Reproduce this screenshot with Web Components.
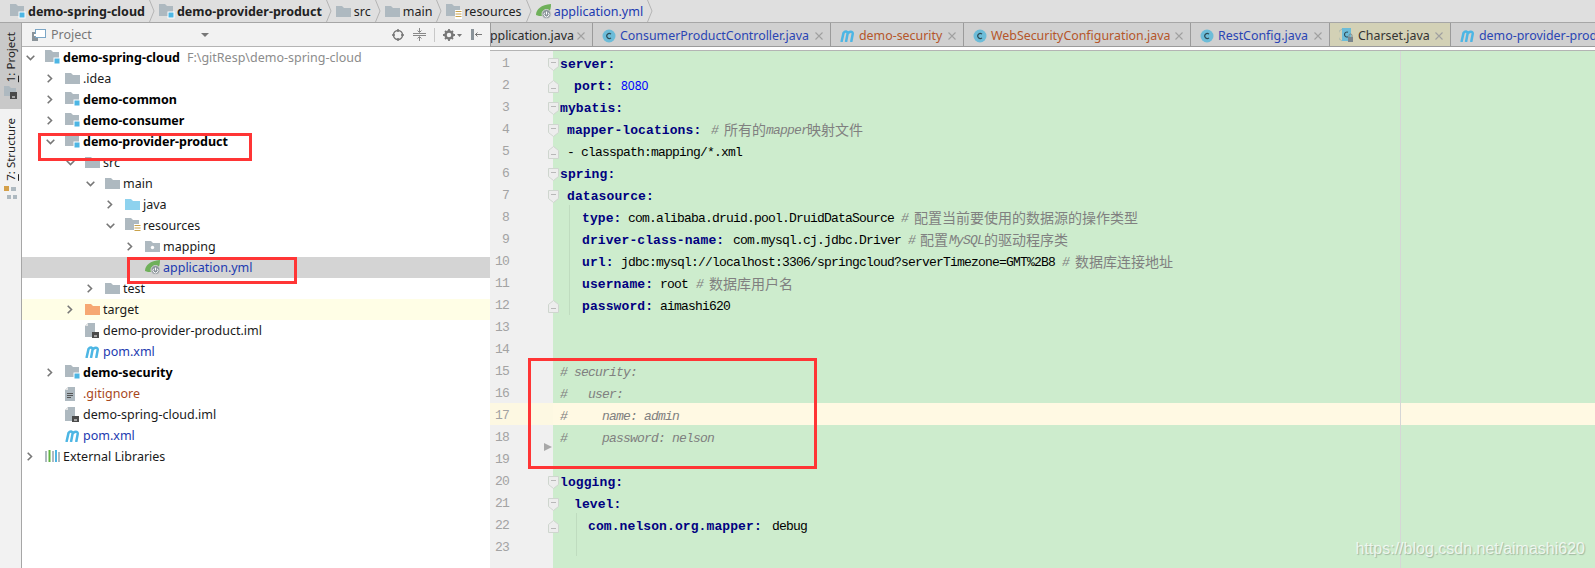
<!DOCTYPE html>
<html>
<head>
<meta charset="utf-8">
<style>
  html, body { margin: 0; padding: 0; height: 100%; overflow: hidden; background: #fff; }
</style>
</head>
<body>
<ide-window></ide-window>
<script>
const ICONS = {
  folder: `<svg width="15" height="13" viewBox="0 0 15 13"><path d="M0 1h6l2 2h7v9H0z" fill="#aeb9c0"/></svg>`,
  module: `<svg width="16" height="15" viewBox="0 0 16 15"><path d="M0 0h6l2 2h6v10H0z" fill="#aeb9c0"/><rect x="9" y="8" width="6" height="6" fill="#4db6e4" stroke="#fff" stroke-width="1"/></svg>`,
  java: `<svg width="15" height="13" viewBox="0 0 15 13"><path d="M0 1h6l2 2h7v9H0z" fill="#8ed2ee"/></svg>`,
  orange: `<svg width="15" height="13" viewBox="0 0 15 13"><path d="M0 1h6l2 2h7v9H0z" fill="#f6a873"/></svg>`,
  res: `<svg width="16" height="15" viewBox="0 0 16 15"><path d="M0 0h6l2 2h6v10H0z" fill="#aeb9c0"/><rect x="9" y="6" width="7" height="9" fill="#fff"/><path d="M9.500 7.500h6M9.500 10h6M9.500 12.500h6" stroke="#c9a24a" stroke-width="1"/></svg>`,
  pkg: `<svg width="15" height="13" viewBox="0 0 15 13"><path d="M0 1h6l2 2h7v9H0z" fill="#aeb9c0"/><circle cx="7.500" cy="7.500" r="1.700" fill="#fff"/></svg>`,
  spring: `<svg width="16" height="15" viewBox="0 0 16 15"><path d="M0 11C0 5 5 1 15 0c0 6-2 10-6 12H3z" fill="#6fb05a"/><circle cx="10.500" cy="10" r="4.500" fill="#8a9399" stroke="#d4d4d4"/><path d="M10.500 7.500v3" stroke="#fff"/><path d="M8.800 8.600a2.500 2.500 0 1 0 3.400 0" fill="none" stroke="#fff"/></svg>`,
  iml: `<svg width="14" height="15" viewBox="0 0 14 15"><path d="M3 0h7v14H0V3z" fill="#aeb9c0"/><path d="M0 3h3V0z" fill="#e4e4e4"/><rect x="7" y="9" width="7" height="6" fill="#4a4a4a"/><path d="M9 13h3" stroke="#fff"/></svg>`,
  text: `<svg width="11" height="14" viewBox="0 0 11 14"><path d="M3 0h7v14H0V3z" fill="#aeb9c0"/><path d="M0 3h3V0z" fill="#e4e4e4"/><path d="M2 6.500h6M2 8.500h6M2 10.500h4" stroke="#555"/></svg>`,
  maven: `<svg width="15" height="12" viewBox="0 0 15 12"><path d="M1.500 12 3.500 3C5 .8 8 1 7.500 4L6 12M7.500 4C9 .8 13.200 1 12.700 4L11.200 12" fill="none" stroke="#4db6e4" stroke-width="2.500"/></svg>`,
  libs: `<svg width="15" height="13" viewBox="0 0 15 13"><path d="M1 1v11" stroke="#aeb9c0" stroke-width="2"/><path d="M4.500 0v12" stroke="#62b543" stroke-width="2"/><path d="M8 1v11" stroke="#aeb9c0" stroke-width="2"/><path d="M11 0v12" stroke="#4db6e4" stroke-width="2"/><path d="M14 2v10" stroke="#aeb9c0" stroke-width="2"/></svg>`,
  cls: `<svg width="14" height="14" viewBox="0 0 14 14"><circle cx="7" cy="7" r="6.500" fill="#6cbcd8"/><path d="M9 5.200A2.500 2.500 0 1 0 9 8.800" fill="none" stroke="#2d4a55" stroke-width="1.100"/></svg>`,
  clsLock: `<svg width="15" height="15" viewBox="0 0 15 15"><path d="M3 1a6.500 6.500 0 0 0 0 12" fill="none" stroke="#a8b8b0"/><rect x="3" y="0" width="9" height="13" fill="#6cbcd8"/><path d="M9 4.200A2.500 2.500 0 1 0 9 8.800" fill="none" stroke="#2d4a55" stroke-width="1.100"/><rect x="9" y="9" width="5" height="5" fill="#7a858c"/><path d="M10 9V7.500a1.500 1.500 0 0 1 3 0V9" fill="none" stroke="#7a858c"/></svg>`
};

class BreadItem extends HTMLElement {
  constructor() {
    super();
    const shadow = this.attachShadow( {mode: 'open'} );
    const icon = ICONS[this.getAttribute( 'icon' )];
    shadow.innerHTML = `
      <style>
        :host { display: flex; align-items: center; height: 22px; flex: none; }
        .icon { display: flex; width: 18px; flex: none; }
        .sep { margin-left: 4px; margin-right: 4px; flex: none; display: flex; }
      </style>
      <span class="icon">${icon}</span>
      <slot></slot>
      <svg class="sep" width="6" height="22" viewBox="0 0 6 22"><path d="M0.500 0 5 11 0.500 22" fill="none" stroke="#b4b4b4"/></svg>
    `;
  }
}

class BreadBar extends HTMLElement {
  constructor() {
    super();
    this.attachShadow( {mode: 'open'} ).innerHTML = `
      <style>
        :host {
          display: flex;
          align-items: center;
          height: 22px;
          padding-left: 10px;
          background: #dfdfdf;
          border-bottom: solid 1px #a6a6a6;
          font: 12.500px "Noto Sans", sans-serif;
          color: #222;
        }
      </style>
      <slot></slot>
    `;
  }
}

class SideStrip extends HTMLElement {
  constructor() {
    super();
    this.attachShadow( {mode: 'open'} ).innerHTML = `
      <style>
        :host {
          display: flex;
          flex-direction: column;
          width: 21px;
          flex: none;
          background: #f2f2f2;
          border-right: solid 1px #a6a6a6;
          font: 11.500px "Noto Sans", sans-serif;
          color: #222;
        }
        .tab { display: flex; flex-direction: column; align-items: center; }
        .on { background: #c9c9c9; height: 86px; padding-top: 9px; box-sizing: border-box; gap: 4px; }
        .off { padding-top: 9px; gap: 5px; }
        .v { writing-mode: vertical-rl; transform: rotate( 180deg ); line-height: 14px; white-space: nowrap; }
        u { text-underline-offset: 1px; }
      </style>
      <div class="tab on">
        <span class="v"><u>1</u>: Project</span>
        <svg width="13" height="13" viewBox="0 0 13 13"><path d="M0 0h5l2 2h5v8H0z" fill="#aeb9c0"/><rect x="6" y="6" width="7" height="7" fill="#4a4a4a"/><path d="M8 11h3" stroke="#fff"/></svg>
      </div>
      <div class="tab off">
        <span class="v"><u>7</u>: Structure</span>
        <svg width="13" height="14" viewBox="0 0 13 14"><rect x="0" y="0" width="5" height="5" fill="#d4a04a"/><path d="M7 1h5v4H7zM3 9h4v4H3zM9 9h4v4H9z" fill="#aeb9c0"/></svg>
      </div>
    `;
  }
}

class ProjectHeader extends HTMLElement {
  constructor() {
    super();
    this.attachShadow( {mode: 'open'} ).innerHTML = `
      <style>
        :host {
          display: flex;
          align-items: center;
          box-sizing: border-box;
          height: 24px;
          flex: none;
          background: #f2f2f2;
          border-bottom: solid 1px #b4b4b4;
          padding-left: 10px;
          font: 12.500px "Noto Sans", sans-serif;
          color: #777;
        }
        .title { margin-left: 5px; width: 150px; }
        .drop { width: 0; height: 0; border: solid 4px transparent; border-top: solid 4px #777; border-bottom: none; margin-right: 183px; }
        svg { flex: none; display: block; }
      </style>
      <svg width="14" height="12" viewBox="0 0 14 12"><rect x="0" y="3" width="6" height="9" fill="#8a9399"/><rect x="3.500" y="0.500" width="10" height="8" fill="#fff" stroke="#7ba6c6"/><rect x="2" y="5" width="2" height="2" fill="#fff"/></svg>
      <span class="title">Project</span>
      <span class="drop"></span>
      <svg width="12" height="12" viewBox="0 0 12 12"><circle cx="6" cy="6" r="4.500" fill="none" stroke="#777" stroke-width="1.500"/><path d="M6 0v3M6 9v3M0 6h3M9 6h3" stroke="#777" stroke-width="1.500"/></svg>
      <svg style="margin-left:9px" width="13" height="13" viewBox="0 0 13 13"><path d="M0 5.500h13M0 7.500h13" stroke="#888"/><path d="M6.500 0v4M4.500 2.500l2 2 2-2M6.500 13V9M4.500 10.500l2-2 2 2" fill="none" stroke="#888"/></svg>
      <span style="width:1px;height:14px;background:#c8c8c8;margin:0 8px"></span>
      <svg width="19" height="12" viewBox="0 0 19 12"><circle cx="6" cy="6" r="3.500" fill="none" stroke="#777" stroke-width="2.500"/><path d="M6 0v2.500M6 9.500V12M0 6h2.500M9.500 6H12M2 2l1.500 1.500M8.500 8.500 10 10M2 10l1.500-1.500M8.500 3.500 10 2" stroke="#777" stroke-width="1.800"/><path d="M14 5h5l-2.500 3z" fill="#777"/></svg>
      <svg style="margin-left:9px" width="11" height="11" viewBox="0 0 11 11"><rect x="0" y="0" width="3" height="11" fill="#8a9399"/><path d="M4 5.500h7M6.500 3.500l-2 2 2 2" fill="none" stroke="#777"/></svg>
    `;
  }
}

class TreeRow extends HTMLElement {
  constructor() {
    super();
    const depth = Number( this.getAttribute( 'depth' ) || 0 );
    const arrow = this.getAttribute( 'arrow' );
    const icon = ICONS[this.getAttribute( 'icon' )];
    let chevron = '';
    if( arrow === 'open' ) {
      chevron = `<svg width="9" height="6" viewBox="0 0 9 6"><path d="M.700.700 4.500 4.500 8.300.700" fill="none" stroke="#777" stroke-width="1.600"/></svg>`;
    }
    if( arrow === 'closed' ) {
      chevron = `<svg width="6" height="9" viewBox="0 0 6 9"><path d="M.700.700 4.500 4.500.700 8.300" fill="none" stroke="#777" stroke-width="1.600"/></svg>`;
    }
    this.attachShadow( {mode: 'open'} ).innerHTML = `
      <style>
        :host {
          display: flex;
          align-items: center;
          height: 21px;
          flex: none;
          padding-left: ${depth * 20}px;
          font: 12.500px/21px "Noto Sans", sans-serif;
          color: #1a1a1a;
          white-space: nowrap;
        }
        :host( [bold] ) { font-weight: 700; color: #000; }
        :host( [hint] ) { background: #fffee6; }
        :host( [selected] ) { background: #d4d4d4; }
        :host( [kind=blue] ) { color: #1c3ab0; }
        :host( [kind=orange] ) { color: #a8481c; }
        .arrow { width: 16px; display: flex; justify-content: center; align-items: center; flex: none; }
        .icon { width: 18px; margin-left: 7px; display: flex; align-items: center; flex: none; }
        .note { color: #8c8c8c; font-weight: 400; margin-left: 7px; }
      </style>
      <span class="arrow">${chevron}</span>
      <span class="icon">${icon}</span>
      <slot></slot>
      <span class="note"><slot name="note"></slot></span>
    `;
  }
}

class ProjectTree extends HTMLElement {
  constructor() {
    super();
    this.attachShadow( {mode: 'open'} ).innerHTML = `
      <style>
        :host { display: flex; flex-direction: column; position: relative; flex: 1; overflow: hidden; background: #fff; }
      </style>
      <slot></slot>
    `;
  }
}

class RedBox extends HTMLElement {
  constructor() {
    super();
    this.attachShadow( {mode: 'open'} ).innerHTML = `
      <style>
        :host { display: block; position: absolute; box-sizing: border-box; border: solid 3px #ff3535; z-index: 5; pointer-events: none; }
      </style>
    `;
  }
}

class EditorTab extends HTMLElement {
  constructor() {
    super();
    const icon = ICONS[this.getAttribute( 'icon' )];
    this.attachShadow( {mode: 'open'} ).innerHTML = `
      <style>
        :host {
          display: flex;
          align-items: center;
          flex: none;
          box-sizing: border-box;
          height: 23px;
          border-right: solid 1px #9b9b9b;
          padding-left: 9px;
          padding-top: 2px;
          font: 12.400px "Noto Sans", sans-serif;
          color: #2a45b4;
          white-space: nowrap;
          overflow: hidden;
        }
        :host( [kind=orange] ) { color: #b5562a; }
        :host( [kind=plain] ) { color: #333; background: #d3d1b6; }
        :host( [kind=clip] ) { color: #2a2a2a; padding-left: 0; }
        .icon { display: flex; margin-right: 4px; flex: none; }
        .x { margin-left: auto; margin-right: 7px; flex: none; display: flex; }
      </style>
      <span class="icon">${icon || ''}</span>
      <slot></slot>
      <svg class="x" width="8" height="8" viewBox="0 0 8 8"><path d="M.500.500l7 7M7.500.500l-7 7" stroke="#a0a0a0" stroke-width="1.100"/></svg>
    `;
  }
}

class TabBar extends HTMLElement {
  constructor() {
    super();
    this.attachShadow( {mode: 'open'} ).innerHTML = `
      <style>
        :host {
          display: flex;
          box-sizing: border-box;
          height: 24px;
          flex: none;
          background: #d0d0d0;
          border-left: solid 1px #9b9b9b;
          border-bottom: solid 1px #9b9b9b;
          overflow: hidden;
        }
      </style>
      <slot></slot>
    `;
  }
}

// fold: d = opens downward, u = closes upward
class CodeLine extends HTMLElement {
  constructor() {
    super();
    const fold = this.getAttribute( 'fold' );
    let marker = '';
    if( fold === 'd' ) {
      marker = `<svg class="fold" width="11" height="13" viewBox="0 0 11 13"><path d="M.500.500h10v8l-5 4-5-4z" fill="#ededed" stroke="#cfd6cf"/><path d="M3 4.500h5" stroke="#b8b8b8"/></svg>`;
    }
    if( fold === 'u' ) {
      marker = `<svg class="fold" width="11" height="13" viewBox="0 0 11 13"><path d="M.500 12.500h10v-8l-5-4-5 4z" fill="#ededed" stroke="#cfd6cf"/><path d="M3 8.500h5" stroke="#b8b8b8"/></svg>`;
    }
    this.attachShadow( {mode: 'open'} ).innerHTML = `
      <style>
        :host { display: flex; height: 22px; flex: none; position: relative; }
        .num {
          box-sizing: border-box;
          width: 63px;
          flex: none;
          background: #f0f0f0;
          text-align: right;
          padding-right: 44px;
          font: 13px/26px "Liberation Mono", monospace;
          letter-spacing: -.8px;
          color: #a3a3a3;
          overflow: hidden;
        }
        :host( [current] ) .num { background: #fdf8e2; }
        .code {
          flex: 1;
          display: flex;
          align-items: flex-start;
          font: 13px/27px "Liberation Mono", "Noto Sans CJK SC", monospace;
          letter-spacing: -.8px;
          color: #000;
        }
        :host( [current] ) .code { background: #fff9e3; }
        .fold { position: absolute; left: 58px; top: 7px; }
      </style>
      <div class="num">${this.getAttribute( 'n' )}</div>
      <div class="code"><slot></slot></div>
      ${marker}
    `;
  }
}

// a run of code that takes a fixed width of the line, so the next run starts at its column
class CodeRun extends HTMLElement {
  constructor() {
    super();
    const at = this.getAttribute( 'at' );
    this.attachShadow( {mode: 'open'} ).innerHTML = `<style>
        :host { display: block; flex: none; white-space: pre; height: 22px; ${at !== null ? 'width: ' + at + 'px;' : ''} }
        :host( [t=key] ) { font-weight: 700; color: #000080; letter-spacing: .1px; }
        :host( [t=num] ) { color: #0000ff; font-family: "Noto Sans", sans-serif; font-size: 12px; line-height: 26px; letter-spacing: 0; }
        :host( [t=com] ) { color: #808080; font-style: italic; }
        :host( [t=sharp] ) { color: #808080; font-style: italic; }
        :host( [t=cjk] ) { color: #808080; font-family: "Noto Sans CJK SC", sans-serif; font-size: 14px; line-height: 24px; letter-spacing: 0; }
      </style><slot></slot>`;
  }
}

class CodeEditor extends HTMLElement {
  constructor() {
    super();
    this.attachShadow( {mode: 'open'} ).innerHTML = `
      <style>
        :host {
          display: flex;
          flex-direction: column;
          position: relative;
          flex: 1;
          overflow: hidden;
          background: linear-gradient( to right, #f0f0f0 63px, #cdeccd 63px );
        }
        .margin { position: absolute; left: 910px; top: 0; bottom: 0; width: 1px; background: #d6d6d6; z-index: 2; }
        .guide { position: absolute; width: 1px; background: #bfdcbf; z-index: 2; }
        .tri { position: absolute; left: 54px; top: 392px; width: 0; height: 0; border-left: solid 8px #a8a8a8; border-top: solid 4px transparent; border-bottom: solid 4px transparent; z-index: 2; }
        .mark {
          position: absolute;
          right: 10px;
          bottom: 10px;
          font: 16px "Liberation Sans", sans-serif;
          color: rgba( 255, 255, 255, .75 );
          text-shadow: 1px 1px 1px rgba( 0, 0, 0, .22 );
          z-index: 3;
        }
      </style>
      <slot></slot>
      <div class="margin"></div>
      <div class="guide" style="left:79px;top:154px;height:110px"></div>
      <div class="guide" style="left:86px;top:462px;height:43px"></div>
      <div class="tri"></div>
      <div class="mark">https://blog.csdn.net/aimashi620</div>
    `;
  }
}

class IdeWindow extends HTMLElement {
  constructor() {
    super();
    const tree = [
      [0, 'open', 'module', 'demo-spring-cloud', 'bold', '', 'F:\\gitResp\\demo-spring-cloud'],
      [1, 'closed', 'folder', '.idea'],
      [1, 'closed', 'module', 'demo-common', 'bold'],
      [1, 'closed', 'module', 'demo-consumer', 'bold'],
      [1, 'open', 'module', 'demo-provider-product', 'bold'],
      [2, 'open', 'folder', 'src'],
      [3, 'open', 'folder', 'main'],
      [4, 'closed', 'java', 'java'],
      [4, 'open', 'res', 'resources'],
      [5, 'closed', 'pkg', 'mapping'],
      [5, '', 'spring', 'application.yml', 'selected', 'blue'],
      [3, 'closed', 'folder', 'test'],
      [2, 'closed', 'orange', 'target', 'hint'],
      [2, '', 'iml', 'demo-provider-product.iml'],
      [2, '', 'maven', 'pom.xml', '', 'blue'],
      [1, 'closed', 'module', 'demo-security', 'bold'],
      [1, '', 'text', '.gitignore', '', 'orange'],
      [1, '', 'iml', 'demo-spring-cloud.iml'],
      [1, '', 'maven', 'pom.xml', '', 'blue'],
      [0, 'closed', 'libs', 'External Libraries']
    ].map( ( [depth, arrow, icon, label, flag, kind, note] ) => `
      <tree-row depth="${depth}" arrow="${arrow}" icon="${icon}" ${flag || ''} kind="${kind || ''}">${label}${note ? `<span slot="note">${note}</span>` : ''}</tree-row>
    ` ).join( '' );

    const k = ( at, s ) => `<code-run t="key" ${at === null ? '' : `at="${at}"`}>${s}</code-run>`;
    const p = ( at, s ) => `<code-run ${at === null ? '' : `at="${at}"`}>${s}</code-run>`;
    const c = ( at, s ) => `<code-run t="com" ${at === null ? '' : `at="${at}"`}>${s}</code-run>`;
    const h = ( at ) => `<code-run t="sharp" at="${at}">#</code-run>`;
    const z = ( at, s ) => `<code-run t="cjk" ${at === null ? '' : `at="${at}"`}>${s}</code-run>`;
    const i = ( w ) => `<code-run at="${w}"></code-run>`;

    const lines = [
      ['d', i( 7 ) + k( null, 'server:' )],
      ['u', i( 21 ) + k( 47, 'port:' ) + `<code-run t="num">8080</code-run>`],
      ['d', i( 7 ) + k( null, 'mybatis:' )],
      ['d', i( 14 ) + k( 144, 'mapper-locations:' ) + h( 13 ) + z( 42, '所有的' ) + c( 41, 'mapper' ) + z( null, '映射文件' )],
      ['u', i( 14 ) + p( 14, '-' ) + p( null, 'classpath:mapping/*.xml' )],
      ['d', i( 7 ) + k( null, 'spring:' )],
      ['d', i( 14 ) + k( null, 'datasource:' )],
      ['', i( 29 ) + k( 46, 'type:' ) + p( 273, 'com.alibaba.druid.pool.DruidDataSource' ) + h( 13 ) + z( null, '配置当前要使用的数据源的操作类型' )],
      ['', i( 29 ) + k( 151, 'driver-class-name:' ) + p( 175, 'com.mysql.cj.jdbc.Driver' ) + h( 12 ) + z( 29, '配置' ) + c( 35, 'MySQL' ) + z( null, '的驱动程序类' )],
      ['', i( 29 ) + k( 39, 'url:' ) + p( 441, 'jdbc:mysql://localhost:3306/springcloud?serverTimezone=GMT%2B8' ) + h( 13 ) + z( null, '数据库连接地址' )],
      ['', i( 29 ) + k( 78, 'username:' ) + p( 36, 'root' ) + h( 13 ) + z( null, '数据库用户名' )],
      ['u', i( 29 ) + k( 78, 'password:' ) + p( null, 'aimashi620' )],
      ['', ''],
      ['', ''],
      ['', i( 7 ) + h( 14 ) + c( null, 'security:' )],
      ['', i( 7 ) + h( 28 ) + c( null, 'user:' )],
      ['', i( 7 ) + h( 42 ) + c( null, 'name: admin' )],
      ['', i( 7 ) + h( 42 ) + c( null, 'password: nelson' )],
      ['', ''],
      ['d', i( 7 ) + k( null, 'logging:' )],
      ['d', i( 21 ) + k( null, 'level:' )],
      ['u', i( 35 ) + k( 184, 'com.nelson.org.mapper:' ) + p( null, 'debug' )],
      ['', ''],
      ['', ''],
      ['', '']
    ].map( ( [fold, html], index ) => {
      const n = index + 1;
      return `<code-line n="${n < 24 ? n : ''}" fold="${fold}" ${n === 17 ? 'current' : ''}>${html}</code-line>`;
    } ).join( '' );

    this.attachShadow( {mode: 'open'} ).innerHTML = `
      <style>
        :host { display: flex; flex-direction: column; position: relative; width: 1595px; height: 568px; overflow: hidden; }
        .body { display: flex; flex: 1; min-height: 0; }
        .left { display: flex; flex-direction: column; width: 468px; flex: none; }
        .right { display: flex; flex-direction: column; flex: 1; min-width: 0; }
        .gap { height: 4px; flex: none; background: #fff; border-bottom: solid 1px #b4b4b4; box-sizing: border-box; }
        b { font-weight: 700; }
        red-box:nth-of-type( 1 ) { left: 38px; top: 133px; width: 214px; height: 28px; }
        red-box:nth-of-type( 2 ) { left: 127px; top: 257px; width: 170px; height: 27px; }
        red-box:nth-of-type( 3 ) { left: 528px; top: 358px; width: 289px; height: 111px; }
      </style>
      <bread-bar>
        <bread-item icon="module"><b>demo-spring-cloud</b></bread-item>
        <bread-item icon="module"><b>demo-provider-product</b></bread-item>
        <bread-item icon="folder">src</bread-item>
        <bread-item icon="folder">main</bread-item>
        <bread-item icon="res">resources</bread-item>
        <bread-item icon="spring"><span style="color:#1c3ab0">application.yml</span></bread-item>
      </bread-bar>
      <div class="body">
        <side-strip></side-strip>
        <div class="left">
          <project-header></project-header>
          <project-tree>${tree}</project-tree>
        </div>
        <div class="right">
          <tab-bar>
            <editor-tab kind="clip" style="width:102px"><span style="margin-left:-13px">Application.java</span></editor-tab>
            <editor-tab icon="cls" style="width:238px">ConsumerProductController.java</editor-tab>
            <editor-tab icon="maven" kind="orange" style="width:133px">demo-security</editor-tab>
            <editor-tab icon="cls" kind="orange" style="width:227px">WebSecurityConfiguration.java</editor-tab>
            <editor-tab icon="cls" style="width:139px">RestConfig.java</editor-tab>
            <editor-tab icon="clsLock" kind="plain" style="width:121px">Charset.java</editor-tab>
            <editor-tab icon="maven" style="width:200px">demo-provider-product.iml</editor-tab>
          </tab-bar>
          <div class="gap"></div>
          <code-editor>${lines}</code-editor>
        </div>
      </div>
      <red-box></red-box>
      <red-box></red-box>
      <red-box></red-box>
    `;
  }
}

window.customElements.define( 'bread-item', BreadItem );
window.customElements.define( 'bread-bar', BreadBar );
window.customElements.define( 'side-strip', SideStrip );
window.customElements.define( 'project-header', ProjectHeader );
window.customElements.define( 'tree-row', TreeRow );
window.customElements.define( 'project-tree', ProjectTree );
window.customElements.define( 'red-box', RedBox );
window.customElements.define( 'editor-tab', EditorTab );
window.customElements.define( 'tab-bar', TabBar );
window.customElements.define( 'code-line', CodeLine );
window.customElements.define( 'code-run', CodeRun );
window.customElements.define( 'code-editor', CodeEditor );
window.customElements.define( 'ide-window', IdeWindow );
</script>
</body>
</html>
